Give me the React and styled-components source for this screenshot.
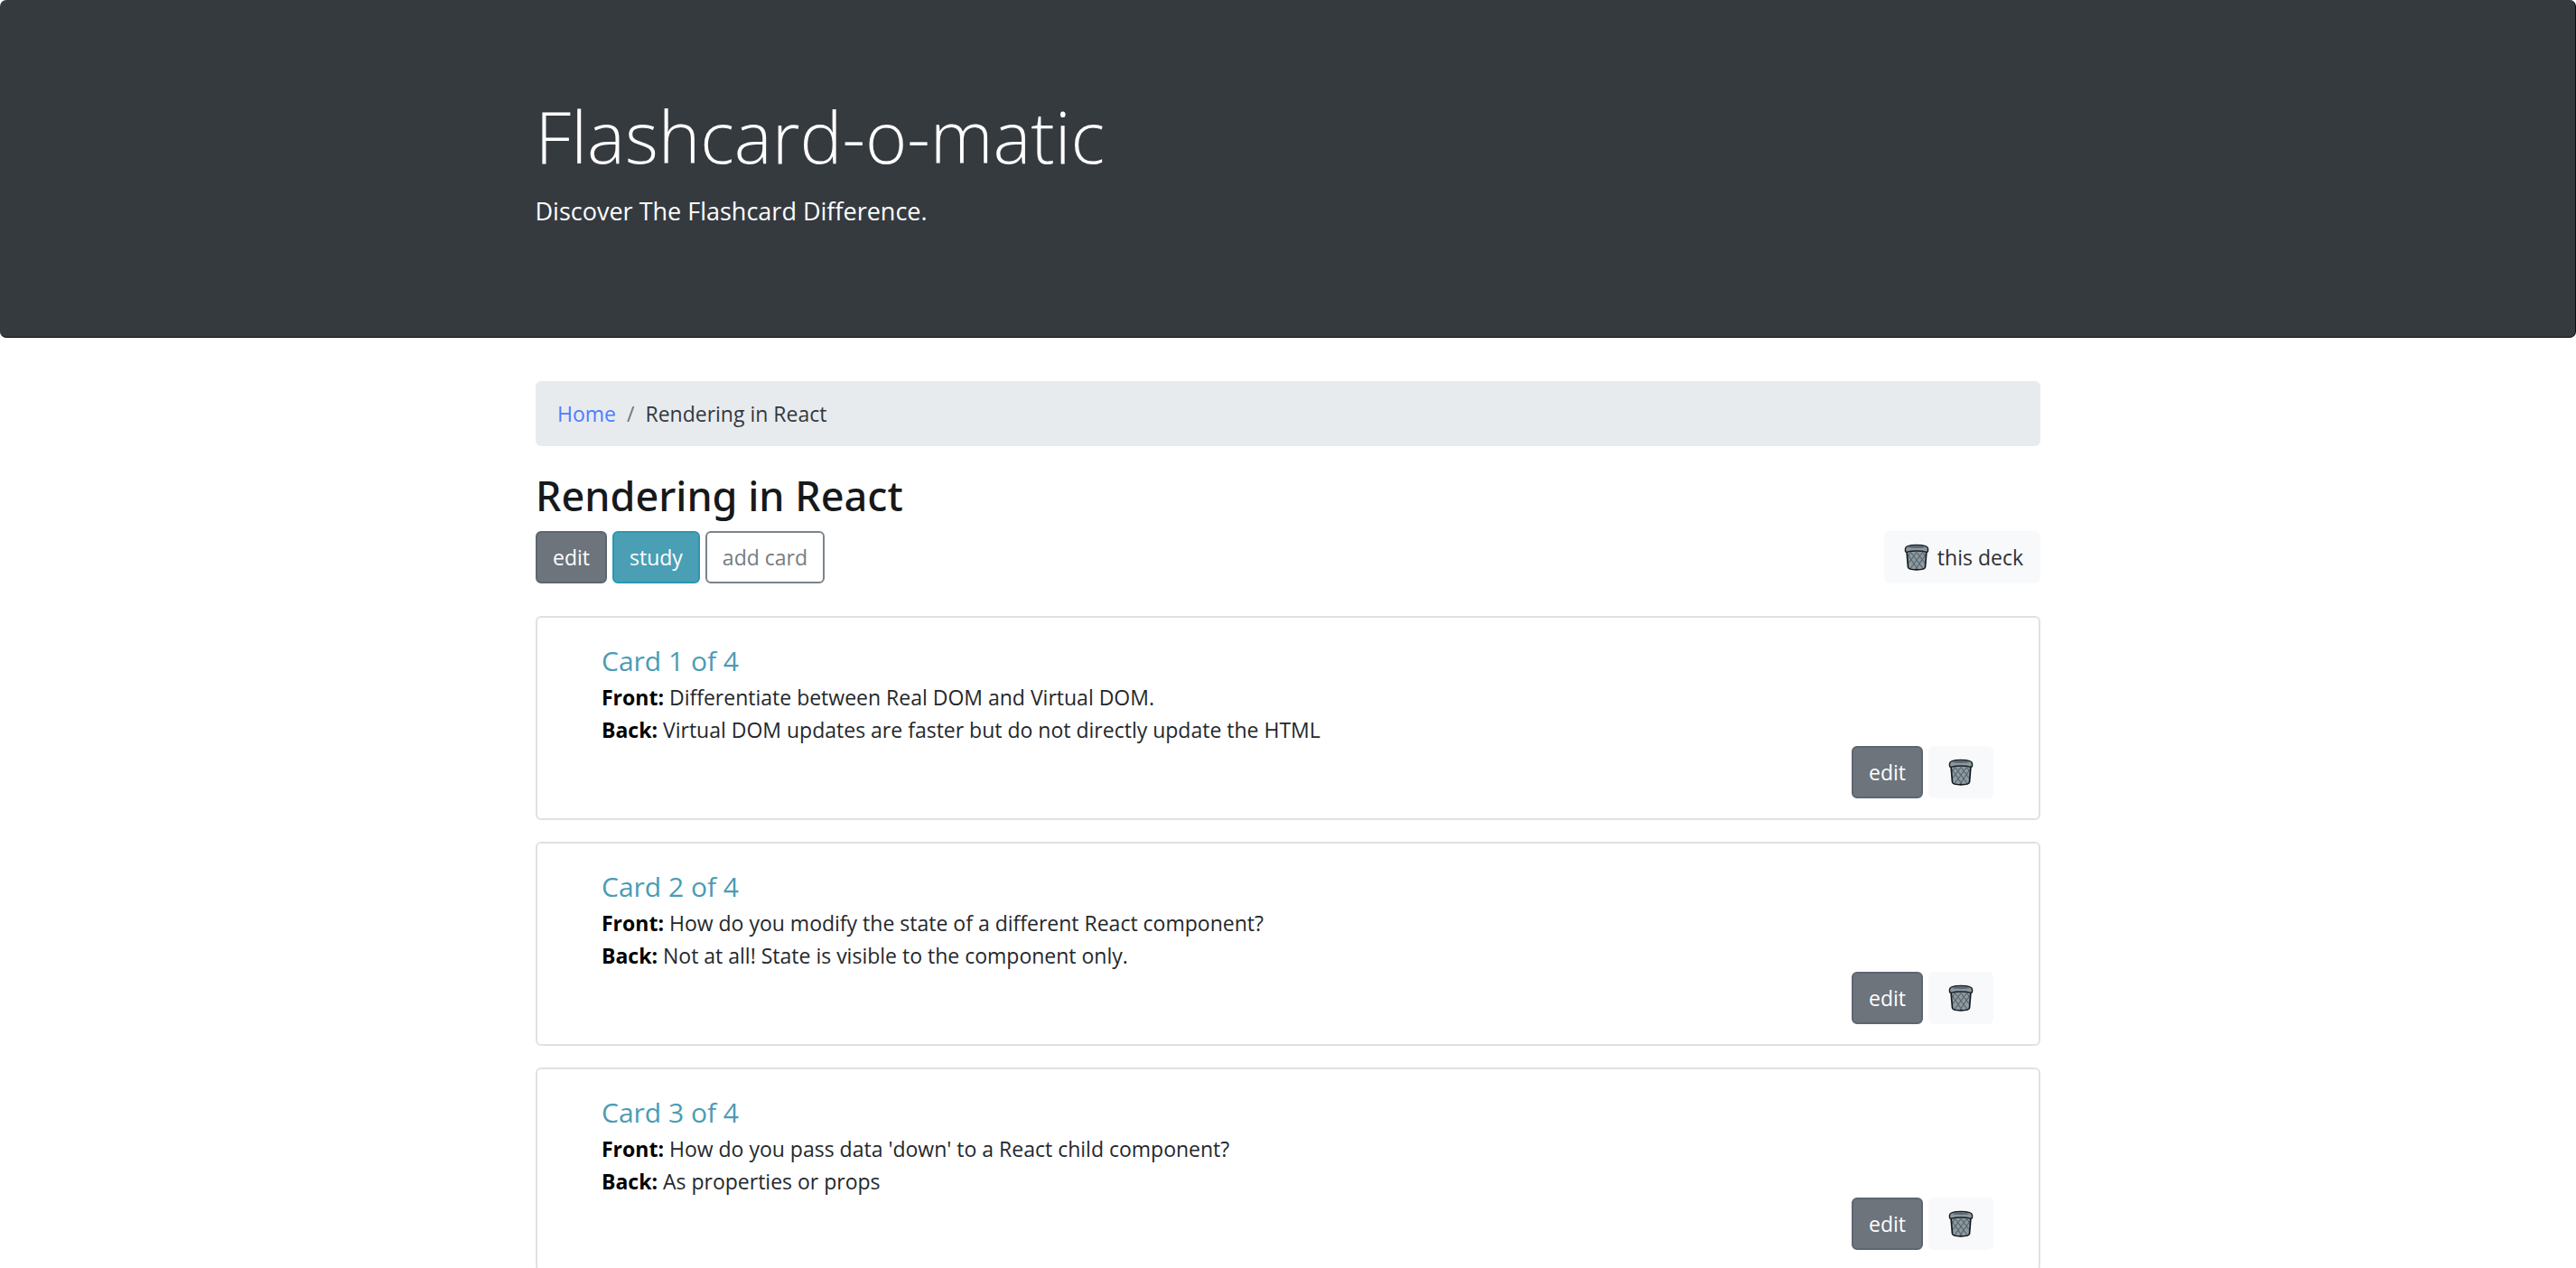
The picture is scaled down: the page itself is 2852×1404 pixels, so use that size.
import React from "react";
import styled, { createGlobalStyle, css } from "styled-components";

const GlobalStyle = createGlobalStyle`
  *, *::before, *::after { box-sizing: border-box; }
  body {
    margin: 0;
    background: #fff;
    color: #24282c;
    font-family: "Open Sans", "Noto Sans", sans-serif;
    font-size: 23px;
    line-height: 36px;
  }
  h1, h2, h3, p, ol { margin: 0; padding: 0; }
`;

const Container = styled.div`
  width: 100%;
  max-width: 1666px;
  margin: 0 auto;
`;

const Jumbotron = styled.header`
  padding: 100px 0 117px;
  background: #353a3f;
  color: #fff;
  border: solid #0b0e11;
  border-width: 0 1px 1px 0;
  border-radius: 7px;
`;

const AppTitle = styled.h1`
  margin-bottom: 10px;
  font-size: 79px;
  font-weight: 300;
  line-height: 101px;
`;

const Tagline = styled.p`
  font-size: 27px;
  font-weight: 400;
  line-height: 45px;
`;

const Breadcrumb = styled.ol`
  display: flex;
  margin: 48px 0 26px;
  padding: 18px 24px;
  list-style: none;
  background: #e8ebee;
  border-radius: 6px;
`;

const Crumb = styled.li`
  color: #33383d;

  & + &::before {
    content: "/";
    padding: 0 12px;
    color: #6c757d;
  }
`;

const CrumbLink = styled.a`
  color: #4c7dff;
  text-decoration: none;
`;

const DeckTitle = styled.h2`
  margin-bottom: 10px;
  color: #16191c;
  font-family: "Noto Sans", "Open Sans", sans-serif;
  font-size: 45px;
  font-weight: 500;
  line-height: 58px;
`;

const Toolbar = styled.div`
  display: flex;
  justify-content: space-between;
  margin-bottom: 36px;
`;

const ButtonGroup = styled.div`
  display: flex;
  justify-content: ${(p) => (p.$end ? "flex-end" : "flex-start")};
  gap: 6px;
`;

const variants = {
  secondary: css`
    background: #6d747c;
    border-color: #5c6670;
    color: #fff;
  `,
  info: css`
    background: #4a9fb5;
    border-color: #2b97af;
    color: #fff;
  `,
  outline: css`
    background: #fff;
    border-color: #7b838a;
    color: #757c83;
  `,
  light: css`
    background: #f8f9fb;
    border-color: #f8f9fb;
    color: #2b3035;
  `,
};

const Button = styled.button`
  display: inline-flex;
  align-items: center;
  gap: 6px;
  padding: 9px 17px;
  border: 2px solid;
  border-radius: 6px;
  font: inherit;
  cursor: pointer;
  ${(p) => variants[p.$variant]}
`;

const CardList = styled.div`
  display: grid;
  gap: 24px;
`;

const Card = styled.article`
  padding: 30px 50px 22px 71px;
  border: 2px solid #e1e1e2;
  border-radius: 6px;
`;

const CardTitle = styled.h3`
  margin-bottom: 4px;
  color: #4a9cb5;
  font-size: 30px;
  font-weight: 400;
  line-height: 36px;
`;

const Label = styled.strong`
  color: #000;
  font-weight: 700;
`;

const TrashSvg = styled.svg`
  width: 34px;
  height: 30px;
  flex: none;
`;

function TrashIcon() {
  return (
    <TrashSvg viewBox="0 0 34 30" fill="none" aria-hidden="true">
      <path d="M6 8 7.500 26c.2 2 3.500 2.800 9.500 2.800s9.300-.8 9.500-2.800L28 8Z" fill="#8d9aa1" />
      <path
        d="m7 12 11 16M10.500 9.500l13.500 18M17 9.500l9 12M23.500 9.500l3.500 5M27 12l-11 16M23.500 9.500l-13.500 18M17 9.500l-9 12M10.500 9.500l-3.500 5"
        stroke="#59656c"
        strokeWidth="1.200"
      />
      <path d="M6 8 7.500 26c.2 2 3.500 2.800 9.500 2.800s9.300-.8 9.500-2.800L28 8" stroke="#15191c" strokeWidth="1.700" />
      <path
        d="M4.500 5.500C4.500 3 9.500 1.500 17 1.500S29.500 3 29.500 5.500v2.400c0 1.300-1.200 1.600-2.200 1.200C24.500 8.200 21 7.900 17 7.900s-7.500.3-10.300 1.200C5.700 9.500 4.500 9.200 4.500 7.900Z"
        fill="#8d9aa1"
        stroke="#1a2023"
        strokeWidth="1.500"
      />
      <path d="M7 4C9 3 12 2.400 17 2.400s8 .6 10 1.600C25 4.600 21.500 4.900 17 4.900S9 4.600 7 4Z" fill="#59666d" />
    </TrashSvg>
  );
}

const DECK_NAME = "Rendering in React";
const CARD_COUNT = 4;
const cards = [
  {
    front: "Differentiate between Real DOM and Virtual DOM.",
    back: "Virtual DOM updates are faster but do not directly update the HTML",
  },
  {
    front: "How do you modify the state of a different React component?",
    back: "Not at all! State is visible to the component only.",
  },
  {
    front: "How do you pass data 'down' to a React child component?",
    back: "As properties or props",
  },
];

export default function App() {
  return (
    <>
      <GlobalStyle />
      <Jumbotron>
        <Container>
          <AppTitle>Flashcard-o-matic</AppTitle>
          <Tagline>Discover The Flashcard Difference.</Tagline>
        </Container>
      </Jumbotron>
      <Container as="main">
        <nav aria-label="breadcrumb">
          <Breadcrumb>
            <Crumb>
              <CrumbLink href="#">Home</CrumbLink>
            </Crumb>
            <Crumb>{DECK_NAME}</Crumb>
          </Breadcrumb>
        </nav>
        <DeckTitle>{DECK_NAME}</DeckTitle>
        <Toolbar>
          <ButtonGroup>
            <Button type="button" $variant="secondary">edit</Button>
            <Button type="button" $variant="info">study</Button>
            <Button type="button" $variant="outline">add card</Button>
          </ButtonGroup>
          <Button type="button" $variant="light">
            <TrashIcon />
            this deck
          </Button>
        </Toolbar>
        <CardList>
          {cards.map((card, i) => (
            <Card key={card.front}>
              <CardTitle>{`Card ${i + 1} of ${CARD_COUNT}`}</CardTitle>
              <p>
                <Label>Front:</Label> {card.front}
              </p>
              <p>
                <Label>Back:</Label> {card.back}
              </p>
              <ButtonGroup $end>
                <Button type="button" $variant="secondary">edit</Button>
                <Button type="button" $variant="light" aria-label="delete card">
                  <TrashIcon />
                </Button>
              </ButtonGroup>
            </Card>
          ))}
        </CardList>
      </Container>
    </>
  );
}
